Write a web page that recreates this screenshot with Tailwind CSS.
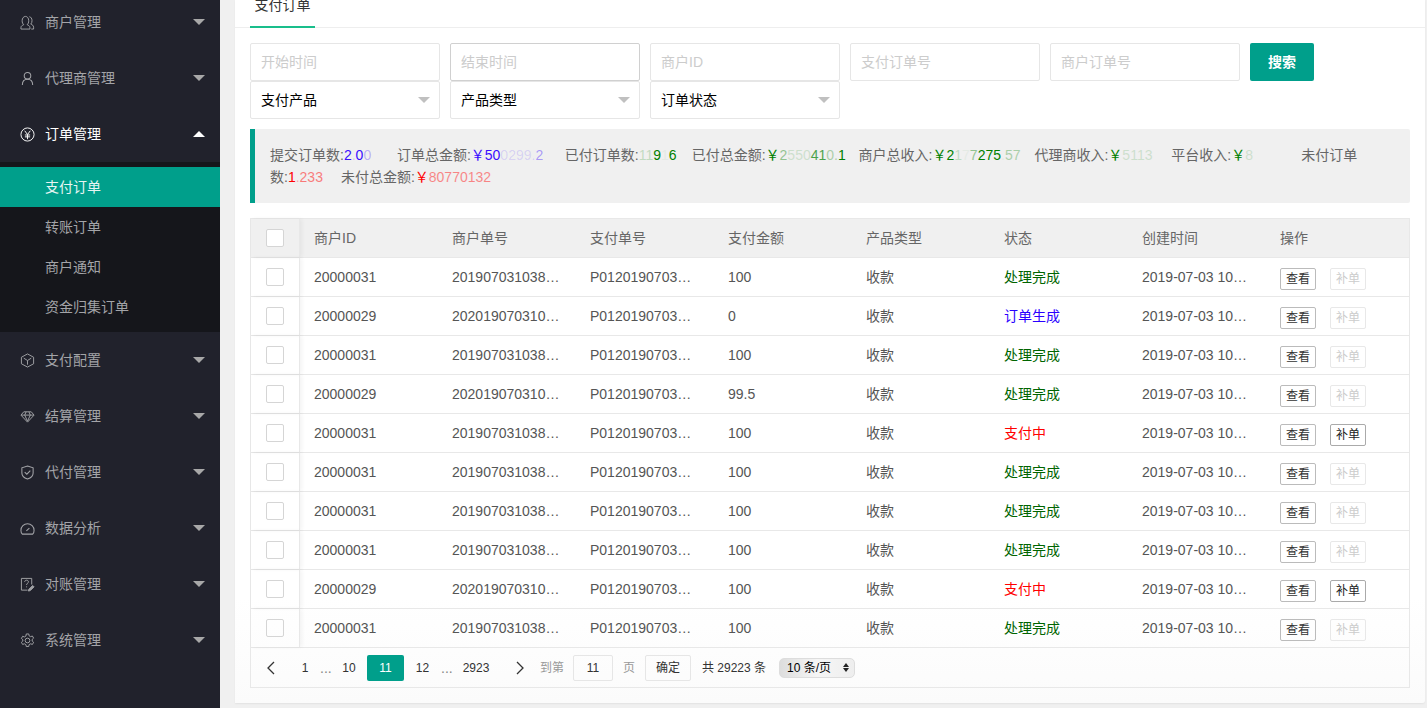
<!DOCTYPE html>
<html lang="zh-CN">
<head>
    <meta charset="UTF-8">
    <title>支付订单</title>
    <script src="https://cdn.jsdelivr.net/npm/@tailwindcss/browser@4"></script>
</head>
<body class="h-[708px] overflow-hidden bg-[#f0f0f0] font-['Liberation_Sans','Noto_Sans_CJK_SC',sans-serif] text-[14px]">
<div class="flex h-[708px] overflow-hidden">
    <!-- sidebar -->
    <aside class="w-[220px] shrink-0 bg-[#21222c] text-[14px] text-[#a3a4a8] -mt-[6px] h-[714px]">
        <div class="flex h-14 items-center pl-5 pr-[15px]">
            <svg class="w-[15px] h-[15px] mr-[10px] shrink-0" viewBox="0 0 16 16" fill="none" stroke="currentColor" stroke-width="1"><path d="M1 15v-1.5c0-1.8 1.6-2.6 3-3.2-1.2-1-1.7-2.3-1.7-4.3C2.300 3.500 3.800 1.500 5.800 1.500S9.300 3.500 9.300 6c0 2-.5 3.300-1.700 4.300 1.400.6 3 1.400 3 3.200V15z"/><path d="M10 1.800c1.700.3 2.800 2 2.800 4.200 0 1.600-.4 2.800-1.300 3.700 1.500.6 3 1.500 3 3.300V15h-2.500"/></svg>
            <span class="flex-1">商户管理</span>
            <i class="w-0 h-0 border-x-[6px] border-x-transparent border-t-[6px] border-t-[#a8a8a8]"></i>
        </div>
        <div class="flex h-14 items-center pl-5 pr-[15px]">
            <svg class="w-[15px] h-[15px] mr-[10px] shrink-0" viewBox="0 0 16 16" fill="none" stroke="currentColor" stroke-width="1.100"><circle cx="8" cy="5" r="3.500"/><path d="M2.500 15c0-3.500 2-6.200 5.500-6.200s5.500 2.700 5.500 6.200"/></svg>
            <span class="flex-1">代理商管理</span>
            <i class="w-0 h-0 border-x-[6px] border-x-transparent border-t-[6px] border-t-[#a8a8a8]"></i>
        </div>
        <div class="flex h-14 items-center pl-5 pr-[15px] text-white">
            <svg class="w-[15px] h-[15px] mr-[10px] shrink-0" viewBox="0 0 16 16" fill="none" stroke="currentColor" stroke-width="1"><circle cx="8" cy="8" r="7"/><path d="M5 4l3 4 3-4M8 8v5M5.200 8.500h5.600M5.200 10.500h5.600"/></svg>
            <span class="flex-1">订单管理</span>
            <i class="w-0 h-0 border-x-[6px] border-x-transparent border-b-[6px] border-b-white"></i>
        </div>
        <div class="bg-[#15161b] py-[5px]">
            <div class="flex h-10 items-center pl-[45px] bg-[#009f8b] text-[#e6f5f3]">支付订单</div>
            <div class="flex h-10 items-center pl-[45px]">转账订单</div>
            <div class="flex h-10 items-center pl-[45px]">商户通知</div>
            <div class="flex h-10 items-center pl-[45px]">资金归集订单</div>
        </div>
        <div class="flex h-14 items-center pl-5 pr-[15px]">
            <svg class="w-[15px] h-[15px] mr-[10px] shrink-0" viewBox="0 0 16 16" fill="none" stroke="currentColor" stroke-width="1"><path d="M8 1l6.500 3.500v7L8 15l-6.500-3.500v-7z"/><path d="M4 5.500l4 2.500 4-2.500M8 8v4.500"/></svg>
            <span class="flex-1">支付配置</span>
            <i class="w-0 h-0 border-x-[6px] border-x-transparent border-t-[6px] border-t-[#a8a8a8]"></i>
        </div>
        <div class="flex h-14 items-center pl-5 pr-[15px]">
            <svg class="w-[15px] h-[15px] mr-[10px] shrink-0" viewBox="0 0 16 16" fill="none" stroke="currentColor" stroke-width="1"><path d="M4 3h8l3 3.500L8 14 1 6.500z"/><path d="M1.500 6.500h13M5 6.500L8 13l3-6.500M5 6.500L6.500 3M11 6.500L9.500 3"/></svg>
            <span class="flex-1">结算管理</span>
            <i class="w-0 h-0 border-x-[6px] border-x-transparent border-t-[6px] border-t-[#a8a8a8]"></i>
        </div>
        <div class="flex h-14 items-center pl-5 pr-[15px]">
            <svg class="w-[15px] h-[15px] mr-[10px] shrink-0" viewBox="0 0 16 16" fill="none" stroke="currentColor" stroke-width="1.100"><path d="M8 1l6 2v5.500c0 3.200-2.500 5.300-6 6.500-3.500-1.200-6-3.300-6-6.500V3z"/><path d="M5 7.500l2.300 2.300L11 6"/></svg>
            <span class="flex-1">代付管理</span>
            <i class="w-0 h-0 border-x-[6px] border-x-transparent border-t-[6px] border-t-[#a8a8a8]"></i>
        </div>
        <div class="flex h-14 items-center pl-5 pr-[15px]">
            <svg class="w-[15px] h-[15px] mr-[10px] shrink-0" viewBox="0 0 16 16" fill="none" stroke="currentColor" stroke-width="1.100"><path d="M2.500 14h11c1-1 1.500-2.500 1.500-4a7 7 0 0 0-14 0c0 1.500.5 3 1.500 4z"/><path d="M6.800 10.500L10 7.500"/></svg>
            <span class="flex-1">数据分析</span>
            <i class="w-0 h-0 border-x-[6px] border-x-transparent border-t-[6px] border-t-[#a8a8a8]"></i>
        </div>
        <div class="flex h-14 items-center pl-5 pr-[15px]">
            <svg class="w-[15px] h-[15px] mr-[10px] shrink-0" viewBox="0 0 16 16" fill="none" stroke="currentColor" stroke-width="1"><path d="M8 14H1.500V1.500h11V8"/><path d="M5 5.200c0-2.400 4-2.400 4 0 0 1.500-2 1.500-2 3.300M7 10v1"/><path d="M9 15l.5-2 4-4 1.500 1.500-4 4z" fill="currentColor"/></svg>
            <span class="flex-1">对账管理</span>
            <i class="w-0 h-0 border-x-[6px] border-x-transparent border-t-[6px] border-t-[#a8a8a8]"></i>
        </div>
        <div class="flex h-14 items-center pl-5 pr-[15px]">
            <svg class="w-[15px] h-[15px] mr-[10px] shrink-0" viewBox="0 0 16 16" fill="none" stroke="currentColor" stroke-width="1"><circle cx="8" cy="8" r="2.500"/><path d="M6.700 1h2.600l.4 2 1.600.9 1.900-.7 1.300 2.300-1.500 1.300v1.800l1.500 1.300-1.300 2.300-1.900-.7-1.600.9-.4 2H6.700l-.4-2-1.600-.9-1.900.7-1.300-2.300 1.500-1.300V7.100L1.500 5.800l1.300-2.300 1.900.7 1.600-.9z"/></svg>
            <span class="flex-1">系统管理</span>
            <i class="w-0 h-0 border-x-[6px] border-x-transparent border-t-[6px] border-t-[#a8a8a8]"></i>
        </div>
    </aside>

    <!-- main -->
    <main class="flex-1 min-w-0 pl-[15px] pr-[2px]">
        <div class="h-[703px] pl-[15px] pr-[15px] rounded-br-[3px] bg-linear-to-b from-white from-85% to-[#fbfbfb] shadow-[0_1px_2px_rgba(0,0,0,.06)]">
            <div class="h-7 border-b border-[#eee] -ml-[15px] -mr-[15px] pl-[15px]">
                <div class="w-[65px] h-7 border-b-2 border-[#19be8b] text-center leading-[11px] text-[#333]">支付订单</div>
            </div>

            <!-- filters -->
            <div class="mt-[15px] flex gap-[10px]">
                <input class="w-[190px] h-[38px] border border-[#e6e6e6] rounded-[2px] px-[10px] placeholder:text-[#ccc] outline-none" placeholder="开始时间">
                <input class="w-[190px] h-[38px] border border-[#d0d0d0] rounded-[2px] px-[10px] placeholder:text-[#ccc] outline-none" placeholder="结束时间">
                <input class="w-[190px] h-[38px] border border-[#e6e6e6] rounded-[2px] px-[10px] placeholder:text-[#ccc] outline-none" placeholder="商户ID">
                <input class="w-[190px] h-[38px] border border-[#e6e6e6] rounded-[2px] px-[10px] placeholder:text-[#ccc] outline-none" placeholder="支付订单号">
                <input class="w-[190px] h-[38px] border border-[#e6e6e6] rounded-[2px] px-[10px] placeholder:text-[#ccc] outline-none" placeholder="商户订单号">
                <button class="w-16 h-[38px] bg-[#009f8b] text-white font-bold rounded-[2px]">搜索</button>
            </div>
            <div class="flex gap-[10px]">
                <div class="w-[190px] h-[38px] border border-[#e6e6e6] rounded-[2px] px-[10px] flex items-center justify-between text-black">支付产品<i class="w-0 h-0 border-x-[6px] border-x-transparent border-t-[6px] border-t-[#c0c0c0] -mr-[1px]"></i></div>
                <div class="w-[190px] h-[38px] border border-[#e6e6e6] rounded-[2px] px-[10px] flex items-center justify-between text-black">产品类型<i class="w-0 h-0 border-x-[6px] border-x-transparent border-t-[6px] border-t-[#c0c0c0] -mr-[1px]"></i></div>
                <div class="w-[190px] h-[38px] border border-[#e6e6e6] rounded-[2px] px-[10px] flex items-center justify-between text-black">订单状态<i class="w-0 h-0 border-x-[6px] border-x-transparent border-t-[6px] border-t-[#c0c0c0] -mr-[1px]"></i></div>
            </div>

            <!-- summary: parts of the values are smudged in the picture -->
            <div class="mt-[10px] h-[74px] border-l-[5px] border-[#009f8b] bg-[#f0f0f0] rounded-r-[2px] pl-[15px] pr-[40px] pt-[15px] leading-[22px] text-[#666]">提交订单数:<span class="inline-block w-[53px] text-[#3a0dff]">2<span class="text-[#3a0dff]/20">.</span>0<span class="text-[#3a0dff]/30">0</span></span>订单总金额:<span class="inline-block w-[94px] text-[#3a0dff]">&#xFFE5;50<span class="text-[#3a0dff]/15">0299.</span><span class="text-[#3a0dff]/40">2</span></span>已付订单数:<span class="inline-block w-[53px] text-[#008000]"><span class="text-[#008000]/20">11</span>9<span class="text-[#008000]/5">1</span>6</span>已付总金额:<span class="inline-block w-[93px] text-[#008000]">&#xFFE5;<span class="text-[#008000]/40">2</span><span class="text-[#008000]/15">550</span><span class="text-[#008000]/70">41</span><span class="text-[#008000]/30">0.</span>1</span>商户总收入:<span class="inline-block w-[102px] text-[#008000]">&#xFFE5;2<span class="text-[#008000]/20">1</span><span class="text-[#008000]/5">7</span><span class="text-[#008000]/40">7</span>275<span class="text-[#008000]/5">.</span><span class="text-[#008000]/30">57</span></span>代理商收入:<span class="inline-block w-[63px] text-[#008000]">&#xFFE5;<span class="text-[#008000]/15">5113</span></span>平台收入:<span class="inline-block w-[70px] text-[#008000]">&#xFFE5;<span class="text-[#008000]/15">8</span></span>未付订单数:<span class="inline-block w-[53px] text-[#f00]">1<span class="text-[#f00]/30">.</span><span class="text-[#f00]/50">233</span></span>未付总金额:<span class="inline-block text-[#f00]">&#xFFE5;<span class="text-[#f00]/45">80770132</span></span></div>

            <!-- table -->
            <div class="mt-[15px] w-[1160px] h-[470px] border border-[#e8e8e8] text-[#555]">
                <div class="flex h-[39px] items-center bg-[#f0f0f0] border-b border-[#e8e8e8] text-[#666]">
                    <div class="w-[49px] h-full flex items-center justify-center border-r border-[#e8e8e8] shadow-[2px_0_4px_rgba(0,0,0,.05)]"><i class="w-[18px] h-[18px] bg-white border border-[#d5d5d5] rounded-[2px]"></i></div>
                    <div class="w-[138px] pl-[14px]">商户ID</div><div class="w-[138px] pl-[14px]">商户单号</div><div class="w-[138px] pl-[14px]">支付单号</div><div class="w-[138px] pl-[14px]">支付金额</div><div class="w-[138px] pl-[14px]">产品类型</div><div class="w-[138px] pl-[14px]">状态</div><div class="w-[138px] pl-[14px]">创建时间</div><div class="pl-[14px]">操作</div>
                </div>

                <div class="flex h-[39px] items-center border-b border-[#e8e8e8]">
                    <div class="w-[49px] h-full flex items-center justify-center border-r border-[#e8e8e8] shadow-[2px_0_4px_rgba(0,0,0,.05)]"><i class="w-[18px] h-[18px] border border-[#d5d5d5] rounded-[2px]"></i></div>
                    <div class="w-[138px] pl-[14px]">20000031</div><div class="w-[138px] px-[14px] truncate">20190703103812345678</div><div class="w-[138px] pl-[14px] pr-[20px] truncate">P01201907031038123</div><div class="w-[138px] pl-[14px]">100</div><div class="w-[138px] pl-[14px]">收款</div><div class="w-[138px] pl-[14px] text-[#006400]">处理完成</div><div class="w-[138px] pl-[14px] pr-[18px] truncate">2019-07-03 10:38:12</div>
                    <div class="flex pl-[14px] gap-[14px] pt-[4px]"><button class="w-9 h-[22px] border border-[#bbb] rounded-[2px] text-[12px] text-[#333]">查看</button><button class="w-9 h-[22px] border border-[#e8e8e8] rounded-[2px] text-[12px] text-[#ccc]">补单</button></div>
                </div>
                <div class="flex h-[39px] items-center border-b border-[#e8e8e8]">
                    <div class="w-[49px] h-full flex items-center justify-center border-r border-[#e8e8e8] shadow-[2px_0_4px_rgba(0,0,0,.05)]"><i class="w-[18px] h-[18px] border border-[#d5d5d5] rounded-[2px]"></i></div>
                    <div class="w-[138px] pl-[14px]">20000029</div><div class="w-[138px] px-[14px] truncate">20201907031038123456</div><div class="w-[138px] pl-[14px] pr-[20px] truncate">P01201907031038123</div><div class="w-[138px] pl-[14px]">0</div><div class="w-[138px] pl-[14px]">收款</div><div class="w-[138px] pl-[14px] text-[#2a00ff]">订单生成</div><div class="w-[138px] pl-[14px] pr-[18px] truncate">2019-07-03 10:38:12</div>
                    <div class="flex pl-[14px] gap-[14px] pt-[4px]"><button class="w-9 h-[22px] border border-[#bbb] rounded-[2px] text-[12px] text-[#333]">查看</button><button class="w-9 h-[22px] border border-[#e8e8e8] rounded-[2px] text-[12px] text-[#ccc]">补单</button></div>
                </div>
                <div class="flex h-[39px] items-center border-b border-[#e8e8e8]">
                    <div class="w-[49px] h-full flex items-center justify-center border-r border-[#e8e8e8] shadow-[2px_0_4px_rgba(0,0,0,.05)]"><i class="w-[18px] h-[18px] border border-[#d5d5d5] rounded-[2px]"></i></div>
                    <div class="w-[138px] pl-[14px]">20000031</div><div class="w-[138px] px-[14px] truncate">20190703103812345678</div><div class="w-[138px] pl-[14px] pr-[20px] truncate">P01201907031038123</div><div class="w-[138px] pl-[14px]">100</div><div class="w-[138px] pl-[14px]">收款</div><div class="w-[138px] pl-[14px] text-[#006400]">处理完成</div><div class="w-[138px] pl-[14px] pr-[18px] truncate">2019-07-03 10:38:12</div>
                    <div class="flex pl-[14px] gap-[14px] pt-[4px]"><button class="w-9 h-[22px] border border-[#bbb] rounded-[2px] text-[12px] text-[#333]">查看</button><button class="w-9 h-[22px] border border-[#e8e8e8] rounded-[2px] text-[12px] text-[#ccc]">补单</button></div>
                </div>
                <div class="flex h-[39px] items-center border-b border-[#e8e8e8]">
                    <div class="w-[49px] h-full flex items-center justify-center border-r border-[#e8e8e8] shadow-[2px_0_4px_rgba(0,0,0,.05)]"><i class="w-[18px] h-[18px] border border-[#d5d5d5] rounded-[2px]"></i></div>
                    <div class="w-[138px] pl-[14px]">20000029</div><div class="w-[138px] px-[14px] truncate">20201907031038123456</div><div class="w-[138px] pl-[14px] pr-[20px] truncate">P01201907031038123</div><div class="w-[138px] pl-[14px]">99.5</div><div class="w-[138px] pl-[14px]">收款</div><div class="w-[138px] pl-[14px] text-[#006400]">处理完成</div><div class="w-[138px] pl-[14px] pr-[18px] truncate">2019-07-03 10:38:12</div>
                    <div class="flex pl-[14px] gap-[14px] pt-[4px]"><button class="w-9 h-[22px] border border-[#bbb] rounded-[2px] text-[12px] text-[#333]">查看</button><button class="w-9 h-[22px] border border-[#e8e8e8] rounded-[2px] text-[12px] text-[#ccc]">补单</button></div>
                </div>
                <div class="flex h-[39px] items-center border-b border-[#e8e8e8]">
                    <div class="w-[49px] h-full flex items-center justify-center border-r border-[#e8e8e8] shadow-[2px_0_4px_rgba(0,0,0,.05)]"><i class="w-[18px] h-[18px] border border-[#d5d5d5] rounded-[2px]"></i></div>
                    <div class="w-[138px] pl-[14px]">20000031</div><div class="w-[138px] px-[14px] truncate">20190703103812345678</div><div class="w-[138px] pl-[14px] pr-[20px] truncate">P01201907031038123</div><div class="w-[138px] pl-[14px]">100</div><div class="w-[138px] pl-[14px]">收款</div><div class="w-[138px] pl-[14px] text-[#f00]">支付中</div><div class="w-[138px] pl-[14px] pr-[18px] truncate">2019-07-03 10:38:12</div>
                    <div class="flex pl-[14px] gap-[14px] pt-[4px]"><button class="w-9 h-[22px] border border-[#bbb] rounded-[2px] text-[12px] text-[#333]">查看</button><button class="w-9 h-[22px] border border-[#aaa] rounded-[2px] text-[12px] text-[#222]">补单</button></div>
                </div>
                <div class="flex h-[39px] items-center border-b border-[#e8e8e8]">
                    <div class="w-[49px] h-full flex items-center justify-center border-r border-[#e8e8e8] shadow-[2px_0_4px_rgba(0,0,0,.05)]"><i class="w-[18px] h-[18px] border border-[#d5d5d5] rounded-[2px]"></i></div>
                    <div class="w-[138px] pl-[14px]">20000031</div><div class="w-[138px] px-[14px] truncate">20190703103812345678</div><div class="w-[138px] pl-[14px] pr-[20px] truncate">P01201907031038123</div><div class="w-[138px] pl-[14px]">100</div><div class="w-[138px] pl-[14px]">收款</div><div class="w-[138px] pl-[14px] text-[#006400]">处理完成</div><div class="w-[138px] pl-[14px] pr-[18px] truncate">2019-07-03 10:38:12</div>
                    <div class="flex pl-[14px] gap-[14px] pt-[4px]"><button class="w-9 h-[22px] border border-[#bbb] rounded-[2px] text-[12px] text-[#333]">查看</button><button class="w-9 h-[22px] border border-[#e8e8e8] rounded-[2px] text-[12px] text-[#ccc]">补单</button></div>
                </div>
                <div class="flex h-[39px] items-center border-b border-[#e8e8e8]">
                    <div class="w-[49px] h-full flex items-center justify-center border-r border-[#e8e8e8] shadow-[2px_0_4px_rgba(0,0,0,.05)]"><i class="w-[18px] h-[18px] border border-[#d5d5d5] rounded-[2px]"></i></div>
                    <div class="w-[138px] pl-[14px]">20000031</div><div class="w-[138px] px-[14px] truncate">20190703103812345678</div><div class="w-[138px] pl-[14px] pr-[20px] truncate">P01201907031038123</div><div class="w-[138px] pl-[14px]">100</div><div class="w-[138px] pl-[14px]">收款</div><div class="w-[138px] pl-[14px] text-[#006400]">处理完成</div><div class="w-[138px] pl-[14px] pr-[18px] truncate">2019-07-03 10:38:12</div>
                    <div class="flex pl-[14px] gap-[14px] pt-[4px]"><button class="w-9 h-[22px] border border-[#bbb] rounded-[2px] text-[12px] text-[#333]">查看</button><button class="w-9 h-[22px] border border-[#e8e8e8] rounded-[2px] text-[12px] text-[#ccc]">补单</button></div>
                </div>
                <div class="flex h-[39px] items-center border-b border-[#e8e8e8]">
                    <div class="w-[49px] h-full flex items-center justify-center border-r border-[#e8e8e8] shadow-[2px_0_4px_rgba(0,0,0,.05)]"><i class="w-[18px] h-[18px] border border-[#d5d5d5] rounded-[2px]"></i></div>
                    <div class="w-[138px] pl-[14px]">20000031</div><div class="w-[138px] px-[14px] truncate">20190703103812345678</div><div class="w-[138px] pl-[14px] pr-[20px] truncate">P01201907031038123</div><div class="w-[138px] pl-[14px]">100</div><div class="w-[138px] pl-[14px]">收款</div><div class="w-[138px] pl-[14px] text-[#006400]">处理完成</div><div class="w-[138px] pl-[14px] pr-[18px] truncate">2019-07-03 10:38:12</div>
                    <div class="flex pl-[14px] gap-[14px] pt-[4px]"><button class="w-9 h-[22px] border border-[#bbb] rounded-[2px] text-[12px] text-[#333]">查看</button><button class="w-9 h-[22px] border border-[#e8e8e8] rounded-[2px] text-[12px] text-[#ccc]">补单</button></div>
                </div>
                <div class="flex h-[39px] items-center border-b border-[#e8e8e8]">
                    <div class="w-[49px] h-full flex items-center justify-center border-r border-[#e8e8e8] shadow-[2px_0_4px_rgba(0,0,0,.05)]"><i class="w-[18px] h-[18px] border border-[#d5d5d5] rounded-[2px]"></i></div>
                    <div class="w-[138px] pl-[14px]">20000029</div><div class="w-[138px] px-[14px] truncate">20201907031038123456</div><div class="w-[138px] pl-[14px] pr-[20px] truncate">P01201907031038123</div><div class="w-[138px] pl-[14px]">100</div><div class="w-[138px] pl-[14px]">收款</div><div class="w-[138px] pl-[14px] text-[#f00]">支付中</div><div class="w-[138px] pl-[14px] pr-[18px] truncate">2019-07-03 10:38:12</div>
                    <div class="flex pl-[14px] gap-[14px] pt-[4px]"><button class="w-9 h-[22px] border border-[#bbb] rounded-[2px] text-[12px] text-[#333]">查看</button><button class="w-9 h-[22px] border border-[#aaa] rounded-[2px] text-[12px] text-[#222]">补单</button></div>
                </div>
                <div class="flex h-[39px] items-center border-b border-[#e8e8e8]">
                    <div class="w-[49px] h-full flex items-center justify-center border-r border-[#e8e8e8] shadow-[2px_0_4px_rgba(0,0,0,.05)]"><i class="w-[18px] h-[18px] border border-[#d5d5d5] rounded-[2px]"></i></div>
                    <div class="w-[138px] pl-[14px]">20000031</div><div class="w-[138px] px-[14px] truncate">20190703103812345678</div><div class="w-[138px] pl-[14px] pr-[20px] truncate">P01201907031038123</div><div class="w-[138px] pl-[14px]">100</div><div class="w-[138px] pl-[14px]">收款</div><div class="w-[138px] pl-[14px] text-[#006400]">处理完成</div><div class="w-[138px] pl-[14px] pr-[18px] truncate">2019-07-03 10:38:12</div>
                    <div class="flex pl-[14px] gap-[14px] pt-[4px]"><button class="w-9 h-[22px] border border-[#bbb] rounded-[2px] text-[12px] text-[#333]">查看</button><button class="w-9 h-[22px] border border-[#e8e8e8] rounded-[2px] text-[12px] text-[#ccc]">补单</button></div>
                </div>

                <!-- pagination -->
                <div class="flex h-[39px] items-center pl-px text-[12px] text-[#333]">
                    <span class="w-[38px] flex justify-center"><svg class="w-[10px] h-[14px]" viewBox="0 0 10 14" fill="none" stroke="#333" stroke-width="1.300"><path d="M8 1L2 7l6 6"/></svg></span>
                    <span class="w-[30px] text-center">1</span>
                    <span class="w-[10px] text-center text-[14px] leading-none text-[#888]">...</span>
                    <span class="w-[37px] pl-px text-center">10</span>
                    <span class="w-[37px] h-[26px] flex items-center justify-center bg-[#009f8b] text-white rounded-[2px]">11</span>
                    <span class="w-[37px] text-center">12</span>
                    <span class="w-[10px] text-center text-[14px] leading-none text-[#888]">...</span>
                    <span class="w-[50px] text-center">2923</span>
                    <span class="w-[38px] flex justify-center"><svg class="w-[10px] h-[14px]" viewBox="0 0 10 14" fill="none" stroke="#333" stroke-width="1.300"><path d="M2 1l6 6-6 6"/></svg></span>
                    <span class="w-[34px] pl-px text-[#999]">到第</span>
                    <span class="w-10 h-[26px] flex items-center justify-center border border-[#e6e6e6] rounded-[2px]">11</span>
                    <span class="w-8 text-center text-[#999]">页</span>
                    <span class="w-[46px] h-[26px] flex items-center justify-center border border-[#e6e6e6] rounded-[2px] pt-px">确定</span>
                    <span class="ml-[11px] w-[77px]">共 29223 条</span>
                    <span class="w-[76px] h-5 flex items-center justify-between pl-[7px] pr-[5px] rounded-[5px] border border-[#ddd] text-black bg-linear-to-r from-[#ddd] via-[#f6f6f6] to-[#eee]">10 条/页<i class="flex flex-col gap-px"><b class="block w-0 h-0 border-x-[3px] border-x-transparent border-b-[4px] border-b-[#222]"></b><b class="block w-0 h-0 border-x-[3px] border-x-transparent border-t-[4px] border-t-[#222]"></b></i></span>
                </div>
            </div>
        </div>
    </main>
</div>
</body>
</html>
